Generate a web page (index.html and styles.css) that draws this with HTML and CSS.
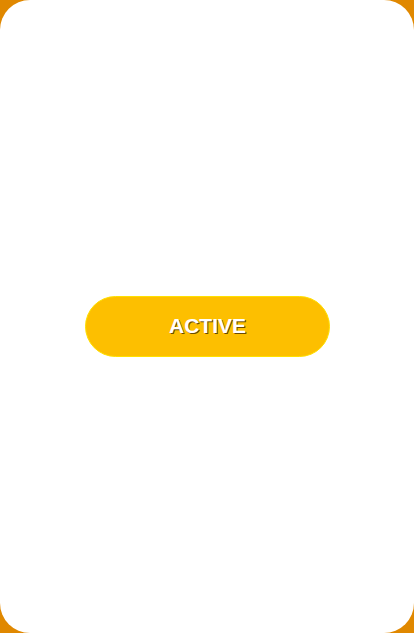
FILE: index.html
```html
<!DOCTYPE html>
<html>
<head>
<meta charset="utf-8">
<link rel="stylesheet" href="styles.css">
</head>
<body>
<div class="card">
  <button class="btn">ACTIVE</button>
</div>
</body>
</html>
```
FILE: styles.css
```css
html, body {
  margin: 0;
  padding: 0;
  height: 100%;
  background: #e08800;
}
.card {
  box-sizing: border-box;
  height: 633px;
  background: #ffffff;
  border-radius: 30px;
  display: flex;
  align-items: center;
  justify-content: center;
  padding-top: 19px;
}
.btn {
  box-sizing: border-box;
  width: 245px;
  height: 61px;
  border-radius: 31px;
  background: #fdbf00;
  border: 1px solid #ffe000;
  color: #ffffff;
  font-family: "Liberation Sans", Arial, sans-serif;
  font-weight: bold;
  font-size: 21px;
  text-shadow: 1px 1px 0 #6b4a00;
  padding: 0;
  margin-left: 1px;
}
```
